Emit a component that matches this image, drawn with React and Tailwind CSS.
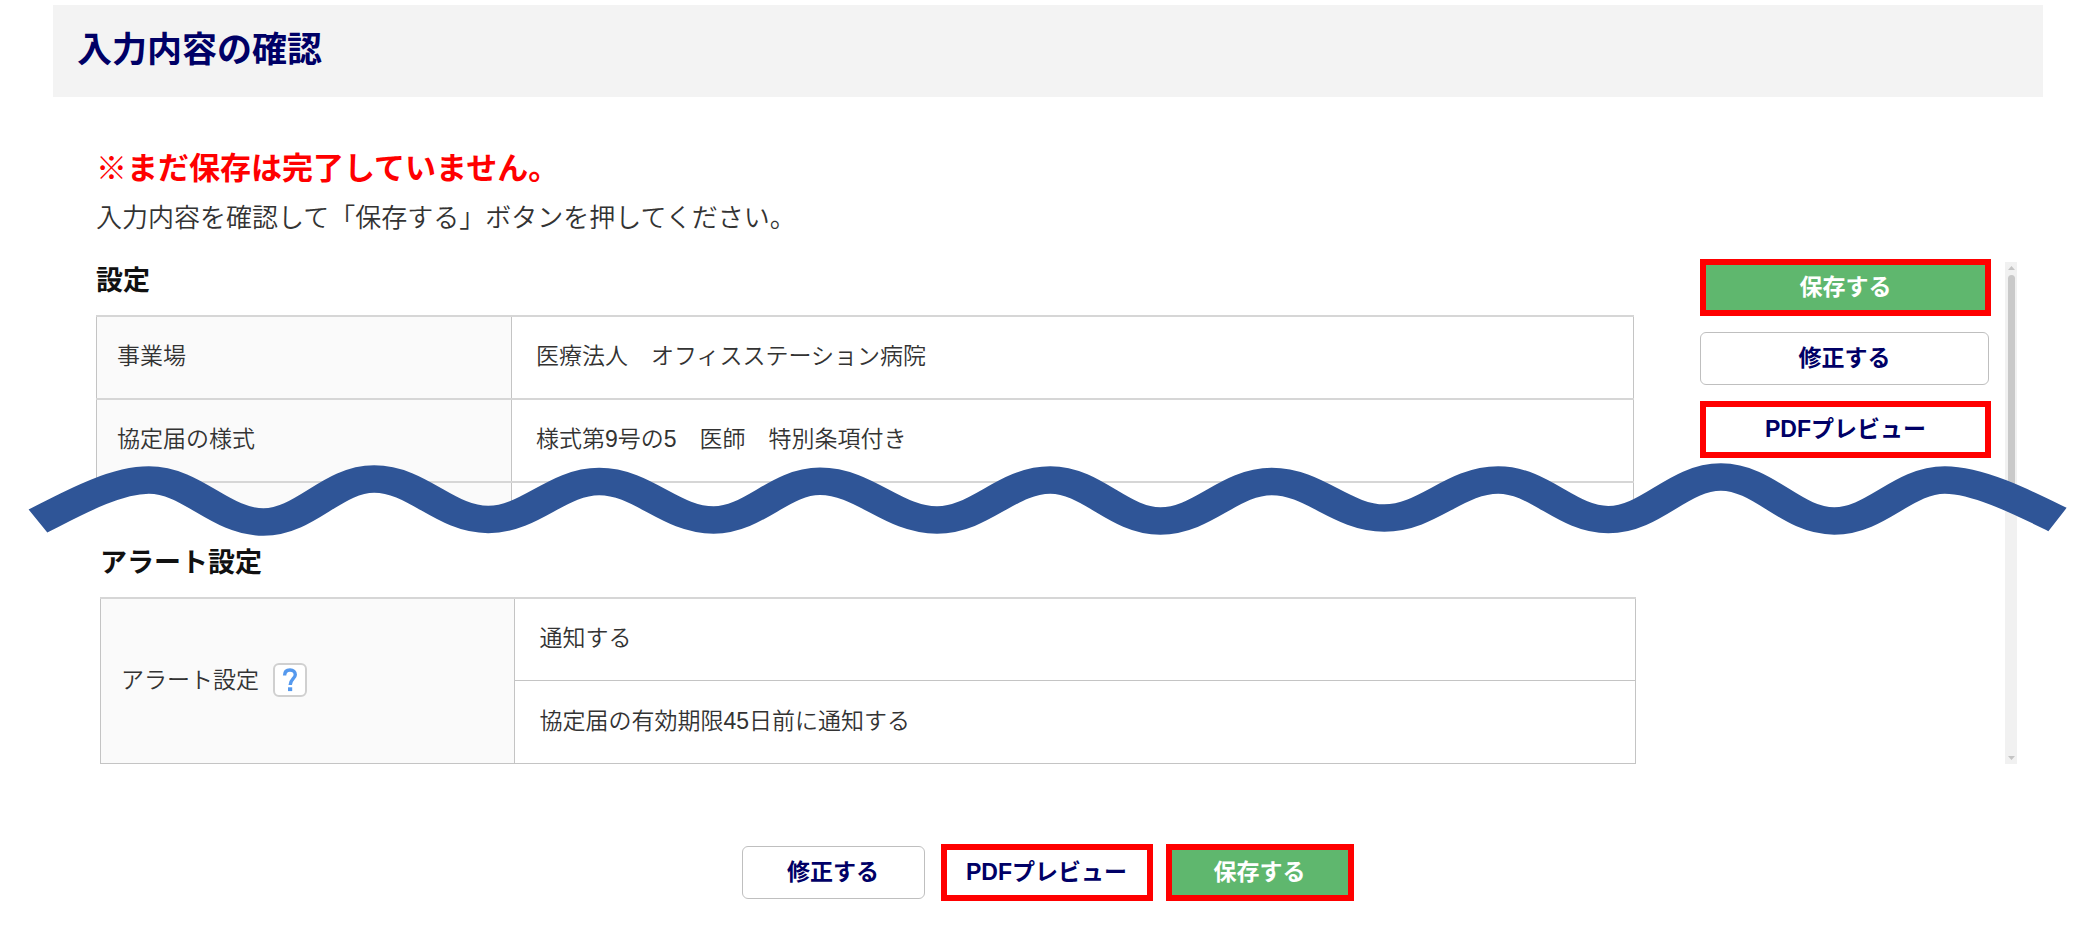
import clsx from "clsx"

const SETTINGS = [
  { label: "事業場", value: "医療法人　オフィスステーション病院" },
  { label: "協定届の様式", value: "様式第9号の5　医師　特別条項付き" },
]

const ALERTS = ["通知する", "協定届の有効期限45日前に通知する"]

// crests and troughs of the tear line
const WAVE = [
  [117.6, 20], [208.2, 62], [295.7, 19], [385.8, 59.5], [473.5, 21.5], [564, 60],
  [648, 21.3], [740.5, 60], [830, 20], [917, 61], [1005, 21.5], [1094, 58],
  [1184, 20], [1271, 59.6], [1360, 17], [1449.6, 61], [1537, 20],
]

function curve(points) {
  return points
    .slice(1)
    .map(([x, y], i) => {
      const [px, py] = points[i]
      const h = (x - px) * 0.38
      return `C${px + h} ${py} ${x - h} ${y} ${x} ${y}`
    })
    .join(" ")
}

const WAVE_START = "M30 61 C55 45 90 20 117.6 20"

function TearLine() {
  return (
    <svg
      viewBox="0 0 1643 90"
      preserveAspectRatio="none"
      className="pointer-events-none absolute inset-x-0 top-[460px] h-[90px] w-full"
      aria-hidden="true"
    >
      {/* hides the part of the table below the line */}
      <path d={`${WAVE_START} ${curve(WAVE.slice(0, 15))} V80 H30 Z`} fill="#fff" />
      <path
        d={`${WAVE_START} ${curve(WAVE)} C1564 20 1601 44 1626 59.5`}
        fill="none"
        stroke="#2f5597"
        strokeWidth="27.4"
      />
    </svg>
  )
}

function ActionButton({ children, primary, marked, className }) {
  return (
    <button
      type="button"
      className={clsx(
        "flex items-center justify-center pb-0.5 text-[23px] leading-6 font-bold",
        primary ? "bg-[#5fb76e] text-white" : "bg-white text-[#000066]",
        marked ? "h-[57px] border-6 border-[#ff0000]" : "h-[53px] rounded-md border border-[#bfbfbf]",
        className
      )}
    >
      {children}
    </button>
  )
}

function HelpButton() {
  return (
    <button
      type="button"
      aria-label="ヘルプ"
      className="flex size-[34px] items-center justify-center rounded-md border-2 border-[#d0d0d0] bg-white"
    >
      <svg width="16" height="24" viewBox="0 0 16 24" fill="none" stroke="#5599ee" strokeWidth="3.4">
        <path d="M2.6 7.6 C2.6 4 4.8 2 8 2 C11.2 2 13.3 4 13.3 6.8 C13.3 10.4 8.2 11.4 8.2 17" />
        <path d="M6 21.2 H10.2" strokeWidth="3.8" />
      </svg>
    </button>
  )
}

function ScrollBar() {
  return (
    <div className="mt-[3px] ml-[14px] flex w-3 shrink-0 flex-col items-center justify-between bg-[#f1f1f1] py-1">
      <div className="flex flex-col items-center gap-[5px]">
        <svg width="7" height="4" viewBox="0 0 7 4" fill="#c4c4c4"><path d="M0 4 L3.5 0 L7 4 Z" /></svg>
        <div className="h-[222px] w-[7px] rounded-full bg-[#c9c9c9]" />
      </div>
      <svg width="7" height="4" viewBox="0 0 7 4" fill="#c4c4c4"><path d="M0 0 L3.5 4 L7 0 Z" /></svg>
    </div>
  )
}

export default function App() {
  return (
    <div className="relative bg-white pt-[5px] pb-9 font-['Liberation_Sans','Noto_Sans_CJK_JP',sans-serif] text-[23px] font-[350] text-[#333]">
      <header className="mr-9 ml-[53px] bg-[#f3f3f3] px-6 pt-[25px] pb-[27px]">
        <h1 className="text-[35px] leading-10 font-bold text-[#000066]">入力内容の確認</h1>
      </header>

      <main>
        <div className="px-24 pt-[52px]">
          <p className="text-[31px] leading-10 font-bold text-[#ff0000]">※まだ保存は完了していません。</p>
          <p className="mt-[9px] text-[26px] leading-10">入力内容を確認して「保存する」ボタンを押してください。</p>
        </div>

        <div className="mt-[21px] mr-[62px] ml-24 flex">
          <div className="min-w-0 flex-1">
            <section className="mr-0.5">
              <h2 className="text-[27px] leading-11 font-bold text-[#111]">設定</h2>
              <table className="mt-3 w-full table-fixed border-collapse border border-[#c4c4c4]">
                <tbody>
                  {SETTINGS.map((row) => (
                    <tr key={row.label} className="h-[83px] border-t-2 border-[#d6d6d6]">
                      <th className="w-[27%] border-r border-[#c4c4c4] bg-[#fafafa] pb-0.5 pl-5 text-left font-[350]">{row.label}</th>
                      <td className="pb-0.5 pl-6">{row.value}</td>
                    </tr>
                  ))}
                  <tr className="h-9 border-t-2 border-[#d6d6d6]">
                    <th className="border-r border-[#c4c4c4] bg-[#fafafa]" />
                    <td />
                  </tr>
                </tbody>
              </table>
            </section>

            <section className="mt-[22px] ml-1">
              <h2 className="text-[27px] leading-11 font-bold text-[#111]">アラート設定</h2>
              <table className="mt-3 w-full table-fixed border-collapse border border-t-2 border-[#c4c4c4]">
                <tbody>
                  {ALERTS.map((text, i) => (
                    <tr key={text} className={clsx("h-[83px]", i === 0 ? "border-t-2 border-[#d6d6d6]" : "border-t border-[#c4c4c4]")}>
                      {i === 0 && (
                        <th rowSpan={2} className="w-[27%] border-r border-[#c4c4c4] bg-[#fafafa] pb-0.5 pl-5 text-left font-[350]">
                          <div className="flex items-center gap-[14px]">
                            アラート設定
                            <HelpButton />
                          </div>
                        </th>
                      )}
                      <td className="pb-0.5 pl-6">{text}</td>
                    </tr>
                  ))}
                </tbody>
              </table>
            </section>
          </div>

          <aside className="ml-16 flex w-[291px] shrink-0 flex-col gap-4">
            <ActionButton primary marked>保存する</ActionButton>
            <ActionButton className="mr-0.5">修正する</ActionButton>
            <ActionButton marked>PDFプレビュー</ActionButton>
          </aside>

          <ScrollBar />
        </div>

        <div className="mt-20 ml-4 flex items-center justify-center">
          <ActionButton className="w-[183px]">修正する</ActionButton>
          <ActionButton marked className="ml-4 w-[212px]">PDFプレビュー</ActionButton>
          <ActionButton primary marked className="ml-[13px] w-[188px]">保存する</ActionButton>
        </div>
      </main>

      <TearLine />
    </div>
  )
}
